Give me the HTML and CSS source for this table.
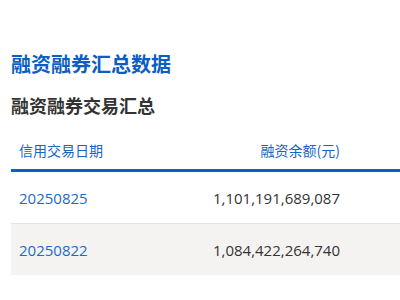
FILE: index.html
```html
<!DOCTYPE html>
<html lang="zh-CN">
<head>
<meta charset="utf-8">
<link rel="stylesheet" href="styles.css">
</head>
<body>
<div class="page">
  <h1 class="title">融资融券汇总数据</h1>
  <h2 class="subtitle">融资融券交易汇总</h2>
  <table class="data">
    <colgroup><col class="c1"><col class="c2"><col class="c3"></colgroup>
    <thead>
      <tr><th class="date">信用交易日期</th><th class="num">融资余额(元)</th><th></th></tr>
    </thead>
    <tbody>
      <tr><td class="date">20250825</td><td class="num">1,101,191,689,087</td><td></td></tr>
      <tr class="alt"><td class="date">20250822</td><td class="num">1,084,422,264,740</td><td></td></tr>
    </tbody>
  </table>
</div>
</body>
</html>
```
FILE: styles.css
```css
html, body {
  margin: 0;
  padding: 0;
  background: #fff;
}
body {
  font-family: "Open Sans", "Noto Sans CJK SC", sans-serif;
  color: #333;
  overflow: hidden;
}
.page {
  padding-left: 11px;
}
.title {
  margin: 50px 0 0;
  font-size: 20px;
  line-height: 28px;
  font-weight: 700;
  color: #0b5fc4;
  font-family: "Noto Sans CJK SC", sans-serif;
}
.subtitle {
  margin: 14px 0 0;
  font-size: 18px;
  line-height: 26px;
  font-weight: 700;
  color: #333;
  font-family: "Noto Sans CJK SC", sans-serif;
}
.data {
  margin-top: 12px;
  border-collapse: collapse;
  table-layout: fixed;
  width: 100%;
}
.c1 { width: 190px; }
.c2 { width: 150px; }
.data th {
  font-family: "Noto Sans CJK SC", sans-serif;
  font-weight: 400;
  font-size: 14px;
  color: #1565c8;
  height: 39px;
  padding: 0 8px;
  vertical-align: middle;
  border-bottom: 3px solid #0a5fc8;
}
.data td {
  font-size: 15px;
  height: 51px;
  padding: 0 8px;
  vertical-align: middle;
  border-bottom: 1px solid #e3e3e3;
}
.data tr.alt td {
  background: #f4f3f2;
  border-bottom: none;
}
.date { text-align: left; }
.data td.date { color: #1a6bc8; }
.num { text-align: right; padding-right: 11px !important; }
```
